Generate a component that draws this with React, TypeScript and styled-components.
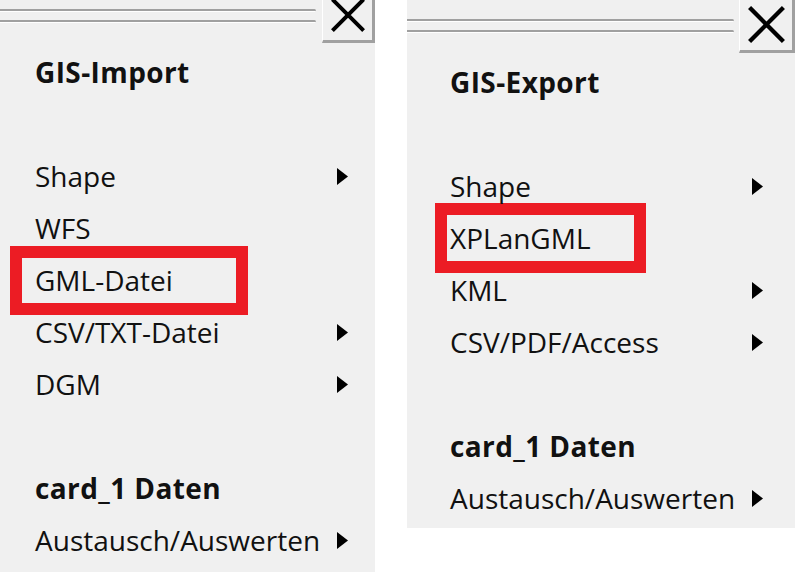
import React from "react";
import styled, { createGlobalStyle } from "styled-components";

const GlobalStyle = createGlobalStyle`
  html, body {
    margin: 0;
    padding: 0;
    background: #ffffff;
  }
  body {
    font-family: "Open Sans", "Noto Sans", "DejaVu Sans", sans-serif;
    color: #111111;
  }
`;

const Page = styled.div`
  display: flex;
  align-items: flex-start;
  gap: 32px;
  width: 800px;
  height: 576px;
  overflow: hidden;
`;

const Panel = styled.div<{ $width: number; $height: number }>`
  width: ${(p) => p.$width}px;
  height: ${(p) => p.$height}px;
  background: #f0f0f0;
  display: flex;
  flex-direction: column;
  flex-shrink: 0;
`;

const Header = styled.div<{ $height: number; $gap: number }>`
  height: ${(p) => p.$height}px;
  display: flex;
  align-items: flex-end;
  gap: ${(p) => p.$gap}px;
  overflow: hidden;
  margin-bottom: 3px;
`;

const Gripper = styled.div`
  flex: 1;
  display: flex;
  flex-direction: column;
  gap: 8px;
  margin-bottom: 20px;
`;

const GripLine = styled.div`
  height: 2px;
  background: #a0a0a0;
  border-bottom: 1px solid #ffffff;
  border-radius: 0 2px 2px 0;
`;

const CloseButton = styled.div<{ $width: number }>`
  width: ${(p) => p.$width}px;
  height: 56px;
  flex-shrink: 0;
  box-sizing: border-box;
  background: #f0f0f0;
  border-left: 1px solid #ffffff;
  border-right: 3px solid #a0a0a0;
  border-bottom: 3px solid #a0a0a0;
  display: flex;
  align-items: center;
  justify-content: center;
  padding-top: 2px;
`;

const Menu = styled.div<{ $left: number; $right: number }>`
  display: flex;
  flex-direction: column;
  padding: 0 ${(p) => p.$right}px 0 ${(p) => p.$left}px;
`;

const Row = styled.div<{ $bold?: boolean }>`
  position: relative;
  height: 52px;
  display: flex;
  align-items: center;
  justify-content: space-between;
  font-size: 28px;
  font-weight: ${(p) => (p.$bold ? 700 : 400)};
  white-space: nowrap;
  letter-spacing: ${(p) => (p.$bold ? "0.4px" : "0")};
`;

const Spacer = styled.div`
  height: 52px;
`;

const Label = styled.span`
  position: relative;
  z-index: 1;
`;

const Highlight = styled.div<{
  $x: number;
  $y: number;
  $w: number;
  $h: number;
}>`
  position: absolute;
  left: ${(p) => p.$x}px;
  top: ${(p) => p.$y}px;
  width: ${(p) => p.$w}px;
  height: ${(p) => p.$h}px;
  box-sizing: border-box;
  border: 12px solid #ec1c24;
  pointer-events: none;
`;

const CloseIcon = ({ size }: { size: number }) => (
  <svg width={size} height={size} viewBox="0 0 36 36">
    <path
      d="M3 3 L33 33 M33 3 L3 33"
      stroke="#000"
      strokeWidth={4.2}
      strokeLinecap="square"
      fill="none"
    />
  </svg>
);

const Arrow = () => (
  <svg width="11" height="17" viewBox="0 0 11 17">
    <polygon points="0,0 11,8.5 0,17" fill="#000" />
  </svg>
);

type Item =
  | { kind: "title"; text: string }
  | { kind: "gap" }
  | {
      kind: "item";
      text: string;
      sub?: boolean;
      mark?: { x: number; y: number; w: number; h: number };
    };

const importItems: Item[] = [
  { kind: "title", text: "GIS-Import" },
  { kind: "gap" },
  { kind: "item", text: "Shape", sub: true },
  { kind: "item", text: "WFS" },
  {
    kind: "item",
    text: "GML-Datei",
    mark: { x: -25, y: -8, w: 238, h: 69 },
  },
  { kind: "item", text: "CSV/TXT-Datei", sub: true },
  { kind: "item", text: "DGM", sub: true },
  { kind: "gap" },
  { kind: "title", text: "card_1 Daten" },
  { kind: "item", text: "Austausch/Auswerten", sub: true },
];

const exportItems: Item[] = [
  { kind: "title", text: "GIS-Export" },
  { kind: "gap" },
  { kind: "item", text: "Shape", sub: true },
  {
    kind: "item",
    text: "XPLanGML",
    mark: { x: -15, y: -9, w: 211, h: 70 },
  },
  { kind: "item", text: "KML", sub: true },
  { kind: "item", text: "CSV/PDF/Access", sub: true },
  { kind: "gap" },
  { kind: "title", text: "card_1 Daten" },
  { kind: "item", text: "Austausch/Auswerten", sub: true },
];

interface MenuPanelProps {
  width: number;
  height: number;
  headerHeight: number;
  buttonWidth: number;
  buttonGap: number;
  iconSize: number;
  padLeft: number;
  padRight: number;
  items: Item[];
}

const MenuPanel: React.FC<MenuPanelProps> = ({
  width,
  height,
  headerHeight,
  buttonWidth,
  buttonGap,
  iconSize,
  padLeft,
  padRight,
  items,
}) => (
  <Panel $width={width} $height={height}>
    <Header $height={headerHeight} $gap={buttonGap}>
      <Gripper>
        <GripLine />
        <GripLine />
      </Gripper>
      <CloseButton $width={buttonWidth}>
        <CloseIcon size={iconSize} />
      </CloseButton>
    </Header>
    <Menu $left={padLeft} $right={padRight}>
      {items.map((item, i) => {
        if (item.kind === "gap") return <Spacer key={i} />;
        if (item.kind === "title")
          return (
            <Row key={i} $bold>
              <Label>{item.text}</Label>
            </Row>
          );
        return (
          <Row key={i}>
            {item.mark && (
              <Highlight
                $x={item.mark.x}
                $y={item.mark.y}
                $w={item.mark.w}
                $h={item.mark.h}
              />
            )}
            <Label>{item.text}</Label>
            {item.sub && <Arrow />}
          </Row>
        );
      })}
    </Menu>
  </Panel>
);

export default function App() {
  return (
    <>
      <GlobalStyle />
      <Page>
        <MenuPanel
          width={375}
          height={572}
          headerHeight={43}
          buttonWidth={53}
          buttonGap={6}
          iconSize={34}
          padLeft={35}
          padRight={27}
          items={importItems}
        />
        <MenuPanel
          width={388}
          height={528}
          headerHeight={53}
          buttonWidth={56}
          buttonGap={5}
          iconSize={37}
          padLeft={43}
          padRight={32}
          items={exportItems}
        />
      </Page>
    </>
  );
}
